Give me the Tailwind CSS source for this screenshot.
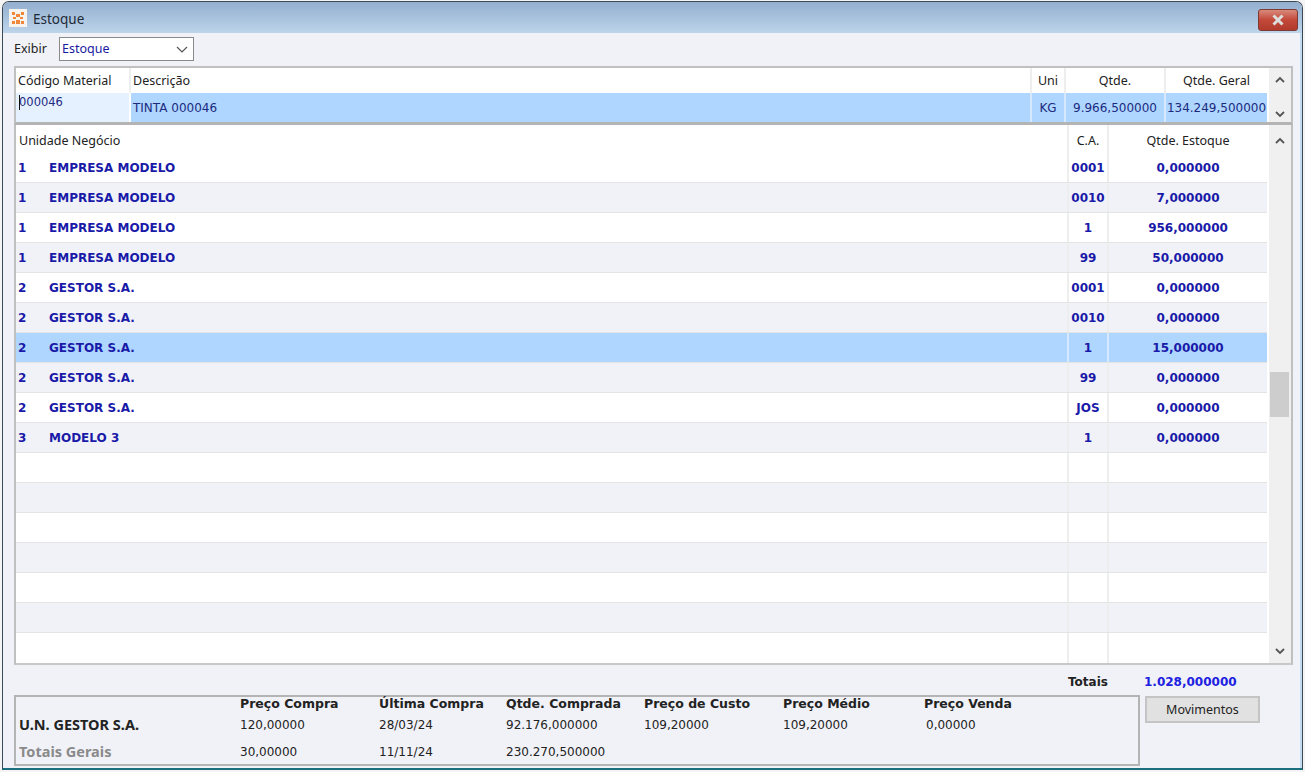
<!DOCTYPE html>
<html lang="pt-BR">
<head>
  <meta charset="UTF-8" />
  <title>Estoque</title>
  <script src="https://cdn.jsdelivr.net/npm/@tailwindcss/browser@4"></script>
</head>
<body class="w-[1305px] h-[772px] overflow-hidden bg-[#f4f4f4] font-['Noto_Sans','Liberation_Sans',sans-serif] text-[12.5px] text-[#222]">
  <!-- Window frame -->
  <div class="ml-[2px] mt-[1px] w-[1301px] h-[769px] flex flex-col rounded-t-[7px] border border-[#3c4a55] border-b-[#1d6f80] border-b-2 overflow-hidden">
    <div class="h-[31px] shrink-0 flex items-center pl-[6px] pr-[4px] bg-[linear-gradient(#93afcf,#bdd4ea)]">
      <div class="w-[18px] h-[18px] bg-[#f7f3ee] flex items-center justify-center">
        <svg width="14" height="14" viewBox="0 0 14 14" fill="#f0883c">
          <rect x="1" y="1" width="3" height="3" /><rect x="10" y="1" width="3" height="3" /><rect x="5" y="3" width="4" height="3" />
          <rect x="2" y="6" width="3" height="2" /><rect x="9" y="6" width="3" height="2" /><rect x="1" y="10" width="3" height="3" /><rect x="5" y="9" width="4" height="4" /><rect x="10" y="10" width="3" height="3" />
        </svg>
      </div>
      <span class="ml-[6px] mt-[3px] text-[13.5px] text-[#1e2a36]">Estoque</span>
      <div class="ml-auto w-[40px] h-[22px] mt-[5px] rounded-[3px] border border-[#7d3a33] bg-[linear-gradient(#d98a7c,#c2493a_50%,#b23a2c)] flex items-center justify-center">
        <svg width="14" height="12" viewBox="0 0 14 12"><path d="M2.5 1.5 L11.5 10.5 M11.5 1.5 L2.5 10.5" stroke="#ddd" stroke-width="3" /></svg>
      </div>
    </div>

    <!-- Client area -->
    <div class="flex-1 min-h-0 bg-[#f1f2f8] border-r-2 border-r-[#c4dcef] pl-[11px] pr-[7px] flex flex-col">
      <div class="h-[33px] shrink-0 flex items-center">
        <span class="w-[45px]">Exibir</span>
        <div class="w-[135px] h-[24px] mb-[1px] bg-white border border-[#8a8a8a] flex items-center justify-between pl-[2px] pr-[5px] text-[#1a1aa0]">
          <span>Estoque</span>
          <svg width="12" height="7" viewBox="0 0 12 7" fill="none"><path d="M1 1 L6 6 L11 1" stroke="#555" stroke-width="1.2" /></svg>
        </div>
      </div>

      <!-- Material panel -->
      <div class="h-[59px] shrink-0 border-2 border-[#c0c0c0] border-b-[3px] border-b-[#b4b4b4] bg-white flex">
        <div class="flex-1 min-w-0 flex flex-col">
          <div class="h-[25px] flex">
            <div class="w-[115px] pl-[2px] pt-[4px] border-r-2 border-[#eeeeee]">Código Material</div>
            <div class="flex-1 pl-[2px] pt-[4px] border-r-2 border-[#eeeeee]">Descrição</div>
            <div class="w-[34px] text-center pt-[4px] border-r-2 border-[#eeeeee]">Uni</div>
            <div class="w-[100px] text-center pt-[4px] border-r-2 border-[#eeeeee]">Qtde.</div>
            <div class="w-[101px] text-center pt-[4px]">Qtde. Geral</div>
          </div>
          <div class="h-[29px] flex text-[#1c2a80] bg-[#aed6ff] font-['DejaVu_Sans',sans-serif] text-[12px]">
            <div class="relative w-[115px] pl-[3px] pt-[1px] bg-[#e6f1ff] border-r-2 border-white text-[11.5px]">000046<span class="absolute left-[3px] top-[2px] w-[1px] h-[15px] bg-[#111]"></span></div>
            <div class="flex-1 pl-[2px] pt-[6px] border-r-2 border-[#d5e8ff]">TINTA 000046</div>
            <div class="w-[34px] text-center pt-[6px] border-r-2 border-[#d5e8ff]">KG</div>
            <div class="w-[100px] text-center pt-[6px] border-r-2 border-[#d5e8ff]">9.966,500000</div>
            <div class="w-[101px] text-center pt-[6px] whitespace-nowrap">134.249,500000</div>
          </div>
        </div>
        <div class="w-[22px] ml-[2px] bg-[#f0f0f0] flex flex-col items-center justify-between pt-[8px] pb-[4px]">
          <svg width="10" height="7" viewBox="0 0 10 7" fill="none"><path d="M1 6 L5 2 L9 6" stroke="#555" stroke-width="1.8" /></svg>
          <svg width="10" height="7" viewBox="0 0 10 7" fill="none"><path d="M1 1 L5 5 L9 1" stroke="#555" stroke-width="1.8" /></svg>
        </div>
      </div>

      <!-- Stock grid -->
      <div class="h-[540px] shrink-0 border-2 border-t-0 border-[#c0c0c0] border-b-[#c8c8c8] bg-white flex">
        <div class="flex-1 min-w-0 flex flex-col">
          <div class="h-[28px] flex items-center">
            <div class="flex-1 pl-[3px] pt-[5px]">Unidade Negócio</div>
            <div class="w-[42px] h-full pt-[5px] flex items-center justify-center border-x-2 border-[#eeeeee]">C.A.</div>
            <div class="w-[158px] pt-[5px] text-center">Qtde. Estoque</div>
          </div>
          <div class="flex-1 flex flex-col font-['DejaVu_Sans',sans-serif] text-[12px] font-bold text-[#1a1aa8]">
            <div class="h-[30px] flex items-center border-b border-[#e4e4e4]"><div class="w-[33px] pl-[2px]">1</div><div class="flex-1">EMPRESA MODELO</div><div class="w-[42px] h-full flex items-center justify-center border-x-2 border-[#eeeeee]">0001</div><div class="w-[158px] text-center">0,000000</div></div>
            <div class="h-[30px] flex items-center border-b border-[#e4e4e4] bg-[#f1f2f8]"><div class="w-[33px] pl-[2px]">1</div><div class="flex-1">EMPRESA MODELO</div><div class="w-[42px] h-full flex items-center justify-center border-x-2 border-[#eeeeee]">0010</div><div class="w-[158px] text-center">7,000000</div></div>
            <div class="h-[30px] flex items-center border-b border-[#e4e4e4]"><div class="w-[33px] pl-[2px]">1</div><div class="flex-1">EMPRESA MODELO</div><div class="w-[42px] h-full flex items-center justify-center border-x-2 border-[#eeeeee]">1</div><div class="w-[158px] text-center">956,000000</div></div>
            <div class="h-[30px] flex items-center border-b border-[#e4e4e4] bg-[#f1f2f8]"><div class="w-[33px] pl-[2px]">1</div><div class="flex-1">EMPRESA MODELO</div><div class="w-[42px] h-full flex items-center justify-center border-x-2 border-[#eeeeee]">99</div><div class="w-[158px] text-center">50,000000</div></div>
            <div class="h-[30px] flex items-center border-b border-[#e4e4e4]"><div class="w-[33px] pl-[2px]">2</div><div class="flex-1">GESTOR S.A.</div><div class="w-[42px] h-full flex items-center justify-center border-x-2 border-[#eeeeee]">0001</div><div class="w-[158px] text-center">0,000000</div></div>
            <div class="h-[30px] flex items-center border-b border-[#e4e4e4] bg-[#f1f2f8]"><div class="w-[33px] pl-[2px]">2</div><div class="flex-1">GESTOR S.A.</div><div class="w-[42px] h-full flex items-center justify-center border-x-2 border-[#eeeeee]">0010</div><div class="w-[158px] text-center">0,000000</div></div>
            <div class="h-[30px] flex items-center border-b border-[#e4e4e4] bg-[#aed6ff]"><div class="w-[33px] pl-[2px]">2</div><div class="flex-1">GESTOR S.A.</div><div class="w-[42px] h-full flex items-center justify-center border-x-2 border-[#d5e8ff]">1</div><div class="w-[158px] text-center">15,000000</div></div>
            <div class="h-[30px] flex items-center border-b border-[#e4e4e4] bg-[#f1f2f8]"><div class="w-[33px] pl-[2px]">2</div><div class="flex-1">GESTOR S.A.</div><div class="w-[42px] h-full flex items-center justify-center border-x-2 border-[#eeeeee]">99</div><div class="w-[158px] text-center">0,000000</div></div>
            <div class="h-[30px] flex items-center border-b border-[#e4e4e4]"><div class="w-[33px] pl-[2px]">2</div><div class="flex-1">GESTOR S.A.</div><div class="w-[42px] h-full flex items-center justify-center border-x-2 border-[#eeeeee]">JOS</div><div class="w-[158px] text-center">0,000000</div></div>
            <div class="h-[30px] flex items-center border-b border-[#e4e4e4] bg-[#f1f2f8]"><div class="w-[33px] pl-[2px]">3</div><div class="flex-1">MODELO 3</div><div class="w-[42px] h-full flex items-center justify-center border-x-2 border-[#eeeeee]">1</div><div class="w-[158px] text-center">0,000000</div></div>
            <div class="h-[30px] flex border-b border-[#e4e4e4]"><div class="flex-1"></div><div class="w-[42px] border-x-2 border-[#eeeeee]"></div><div class="w-[158px]"></div></div>
            <div class="h-[30px] flex border-b border-[#e4e4e4] bg-[#f1f2f8]"><div class="flex-1"></div><div class="w-[42px] border-x-2 border-[#eeeeee]"></div><div class="w-[158px]"></div></div>
            <div class="h-[30px] flex border-b border-[#e4e4e4]"><div class="flex-1"></div><div class="w-[42px] border-x-2 border-[#eeeeee]"></div><div class="w-[158px]"></div></div>
            <div class="h-[30px] flex border-b border-[#e4e4e4] bg-[#f1f2f8]"><div class="flex-1"></div><div class="w-[42px] border-x-2 border-[#eeeeee]"></div><div class="w-[158px]"></div></div>
            <div class="h-[30px] flex border-b border-[#e4e4e4]"><div class="flex-1"></div><div class="w-[42px] border-x-2 border-[#eeeeee]"></div><div class="w-[158px]"></div></div>
            <div class="h-[30px] flex border-b border-[#e4e4e4] bg-[#f1f2f8]"><div class="flex-1"></div><div class="w-[42px] border-x-2 border-[#eeeeee]"></div><div class="w-[158px]"></div></div>
            <div class="flex-1 flex"><div class="flex-1"></div><div class="w-[42px] border-x-2 border-[#eeeeee]"></div><div class="w-[158px]"></div></div>
          </div>
        </div>
        <div class="w-[22px] ml-[2px] bg-[#f0f0f0] flex flex-col items-center justify-between pt-[12px] pb-[8px] relative">
          <svg width="10" height="7" viewBox="0 0 10 7" fill="none"><path d="M1 6 L5 2 L9 6" stroke="#555" stroke-width="1.8" /></svg>
          <div class="absolute left-[1px] top-[247px] w-[19px] h-[45px] bg-[#cdcdcd]"></div>
          <svg width="10" height="7" viewBox="0 0 10 7" fill="none"><path d="M1 1 L5 5 L9 1" stroke="#555" stroke-width="1.8" /></svg>
        </div>
      </div>

      <!-- Totals -->
      <div class="h-[30px] shrink-0 flex items-center font-['DejaVu_Sans',sans-serif] font-bold text-[12px] pt-[3px]">
        <span class="ml-[1054px] w-[76px] text-[#222]">Totais</span>
        <span class="text-[#2020e0]">1.028,000000</span>
      </div>

      <!-- Footer -->
      <div class="flex items-start gap-[5px]">
        <div class="w-[1126px] h-[71px] border-2 border-[#b4b4b4] pl-[3px] grid grid-cols-[221px_139px_127px_138px_139px_141px_1fr] grid-rows-[15px_26px_27px] items-center font-['DejaVu_Sans',sans-serif] text-[12px]">
          <div></div>
          <div class="font-bold text-[12.5px] text-[#222]">Preço Compra</div>
          <div class="font-bold text-[12.5px] text-[#222]">Última Compra</div>
          <div class="font-bold text-[12.5px] text-[#222]">Qtde. Comprada</div>
          <div class="font-bold text-[12.5px] text-[#222]">Preço de Custo</div>
          <div class="font-bold text-[12.5px] text-[#222]">Preço Médio</div>
          <div class="font-bold text-[12.5px] text-[#222]">Preço Venda</div>
          <div class="font-['Noto_Sans',sans-serif] font-bold text-[14.5px]">U.N. GESTOR S.A.</div>
          <div>120,00000</div>
          <div>28/03/24</div>
          <div>92.176,000000</div>
          <div>109,20000</div>
          <div>109,20000</div>
          <div class="pl-[2px]">0,00000</div>
          <div class="font-['Noto_Sans',sans-serif] font-bold text-[14.5px] text-[#8a8a8a]">Totais Gerais</div>
          <div>30,00000</div>
          <div>11/11/24</div>
          <div>230.270,500000</div>
          <div></div><div></div><div></div>
        </div>
        <button class="w-[115px] h-[27px] mt-[1px] pt-[1px] bg-[#e1e1e1] border-2 border-[#c4c4c4] text-[#222]">Movimentos</button>
      </div>
    </div>
  </div>
</body>
</html>
